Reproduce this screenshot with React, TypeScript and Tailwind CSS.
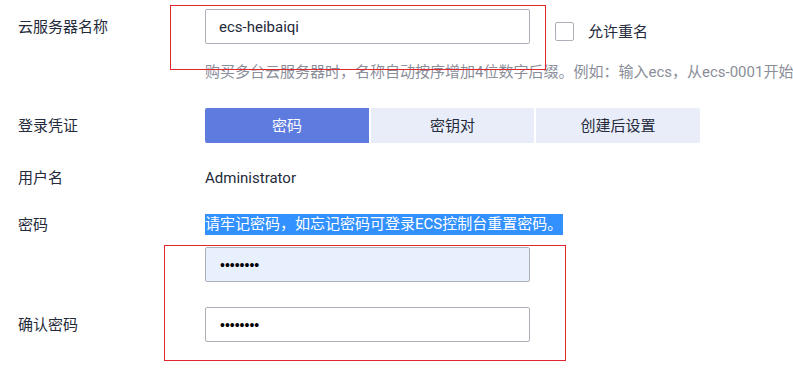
import React from "react";

const font = { fontFamily: 'Roboto, "Noto Sans CJK SC", sans-serif' };

function Label({ children }: { children: React.ReactNode }) {
  return <div className="w-[205px] shrink-0 pl-[18px] text-[15px] text-[#252b3a]">{children}</div>;
}

export default function App() {
  return (
    <div
      className="relative w-[793px] h-[379px] overflow-hidden bg-white text-[15px] leading-[20px] text-[#252b3a]"
      style={font}
    >
      {/* Row 1 */}
      <div className="flex items-center pt-[9px]">
        <Label>云服务器名称</Label>
        <div className="flex h-[35px] w-[325px] items-center rounded-[2px] border border-[#adb0b8] pl-[13px]">
          ecs-heibaiqi
        </div>
        <div className="ml-[25px] mt-[10px] h-[19px] w-[19px] rounded-[2px] border border-[#adb0b8]" />
        <div className="ml-[14px] mt-[10px]">允许重名</div>
      </div>
      <div className="mt-[18px] whitespace-nowrap pl-[205px] text-[#8a8e99]">
        购买多台云服务器时，名称自动按序增加4位数字后缀。例如：输入ecs，从ecs-0001开始
      </div>

      {/* Tabs */}
      <div className="mt-[26px] flex items-center">
        <Label>登录凭证</Label>
        <div className="flex gap-[2px]">
          <div className="flex h-[35px] w-[164px] items-center justify-center rounded-l-[2px] bg-[#5e7ce0] text-white">
            密码
          </div>
          <div className="flex h-[35px] w-[163px] items-center justify-center bg-[#e9edfa]">密钥对</div>
          <div className="flex h-[35px] w-[164px] items-center justify-center rounded-r-[2px] bg-[#e9edfa]">
            创建后设置
          </div>
        </div>
      </div>

      {/* Username */}
      <div className="mt-[25px] flex items-center">
        <Label>用户名</Label>
        <div>Administrator</div>
      </div>

      {/* Password */}
      <div className="mt-[26px] flex items-center">
        <Label>密码</Label>
        <div className="h-[21px] whitespace-nowrap bg-[#3390ff] pr-[1px] leading-[21px] text-white">
          请牢记密码，如忘记密码可登录ECS控制台重置密码。
        </div>
      </div>
      <div className="mt-[12px] pl-[205px]">
        <div
          className="flex h-[35px] w-[325px] items-center rounded-[2px] border border-[#adb0b8] bg-[#e8f0fe] pl-[14px] text-[14px] text-[#000]"
          style={{ fontFamily: '"Liberation Sans", sans-serif' }}
        >
          ••••••••
        </div>
      </div>

      {/* Confirm */}
      <div className="mt-[25px] flex items-center">
        <Label>确认密码</Label>
        <div
          className="flex h-[35px] w-[325px] items-center rounded-[2px] border border-[#adb0b8] bg-white pl-[14px] text-[14px] text-[#000]"
          style={{ fontFamily: '"Liberation Sans", sans-serif' }}
        >
          ••••••••
        </div>
      </div>

      {/* Annotation boxes */}
      <div className="pointer-events-none absolute left-[170px] top-[5px] h-[65px] w-[376px] border border-[#e3262c]" />
      <div className="pointer-events-none absolute left-[164px] top-[245px] h-[116px] w-[402px] border border-[#e3262c]" />
    </div>
  );
}
